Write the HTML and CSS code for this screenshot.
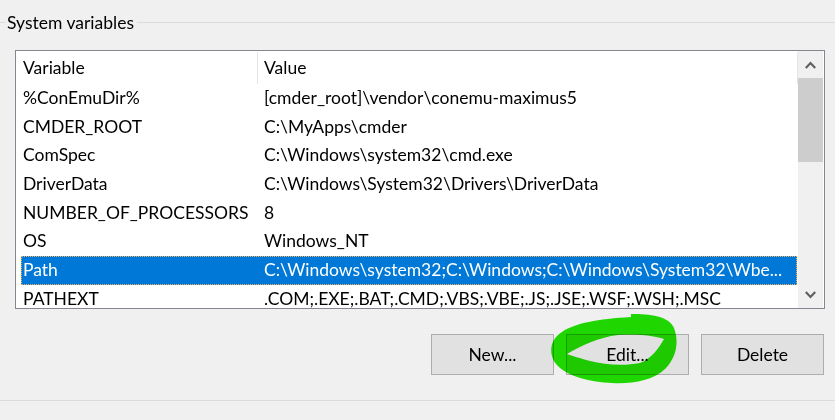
FILE: index.html
```html
<!DOCTYPE html>
<html>
<head>
<meta charset="utf-8">
<link rel="stylesheet" href="styles.css">
</head>
<body>
<div class="page">
  <div class="group-title">
    <div class="lead"></div>
    <div class="label">System variables</div>
    <div class="rule"></div>
  </div>

  <div class="listbox">
    <div class="content">
      <div class="header">
        <div class="hcell hvar">Variable</div>
        <div class="hcell hval">Value</div>
      </div>
      <div class="row"><div class="cvar">%ConEmuDir%</div><div class="cval">[cmder_root]\vendor\conemu-maximus5</div></div>
      <div class="row"><div class="cvar">CMDER_ROOT</div><div class="cval">C:\MyApps\cmder</div></div>
      <div class="row"><div class="cvar">ComSpec</div><div class="cval">C:\Windows\system32\cmd.exe</div></div>
      <div class="row"><div class="cvar">DriverData</div><div class="cval">C:\Windows\System32\Drivers\DriverData</div></div>
      <div class="row"><div class="cvar">NUMBER_OF_PROCESSORS</div><div class="cval">8</div></div>
      <div class="row"><div class="cvar">OS</div><div class="cval">Windows_NT</div></div>
      <div class="row selected"><div class="cvar">Path</div><div class="cval">C:\Windows\system32;C:\Windows;C:\Windows\System32\Wbe...</div></div>
      <div class="row"><div class="cvar">PATHEXT</div><div class="cval">.COM;.EXE;.BAT;.CMD;.VBS;.VBE;.JS;.JSE;.WSF;.WSH;.MSC</div></div>
    </div>
    <div class="scrollbar">
      <div class="sbtn">
        <svg width="11" height="8" viewBox="0 0 11 8"><polyline points="0.8,7 5.5,2 10.2,7" fill="none" stroke="#606060" stroke-width="2.2"/></svg>
      </div>
      <div class="thumb"></div>
      <div class="track"></div>
      <div class="sbtn">
        <svg width="11" height="8" viewBox="0 0 11 8"><polyline points="0.8,1 5.5,6 10.2,1" fill="none" stroke="#606060" stroke-width="2.2"/></svg>
      </div>
    </div>
  </div>

  <div class="buttons">
    <button class="btn">New...</button>
    <button class="btn">Edit...</button>
    <button class="btn">Delete</button>
  </div>

  <div class="bottom-rule"></div>

  <svg class="scribble" width="835" height="420" viewBox="0 0 835 420">
    <path fill-rule="evenodd" fill="#22e400" d="M631,314 C650,314 669,316 674,328 C679,341 677,357 665,369 C652,381 632,384 612,383 C591,382 567,377 556,364 C548,354 550,339 562,332 C575,323 598,319 631,317 Z M567,354 C580,346 600,337 618,335 C635,334 654,335 664,339 C659,348 651,359 640,363 C625,366 605,365 590,361 C580,358 572,356 567,354 Z"/>
  </svg>
</div>
</body>
</html>
```
FILE: styles.css
```css
html, body {
  margin: 0;
  padding: 0;
}
body {
  background: #f0f0f0;
  font-family: Lato, "Noto Sans", sans-serif;
  font-size: 17.5px;
  color: #000;
}
.page {
  position: relative;
  width: 835px;
  height: 420px;
  overflow: hidden;
}
.group-title {
  display: flex;
  height: 50px;
}
.lead {
  width: 6px;
  height: 0;
  margin-top: 22px;
  border-top: 1px solid #dcdcdc;
}
.label {
  padding: 11px 3px 0 1px;
  line-height: 24px;
  height: 24px;
  white-space: nowrap;
}
.rule {
  flex: 1;
  height: 0;
  margin-top: 22px;
  border-top: 1px solid #dcdcdc;
}
.listbox {
  margin-left: 15px;
  width: 810px;
  height: 259px;
  box-sizing: border-box;
  border: 1px solid #828790;
  background: #fff;
  display: flex;
  overflow: hidden;
}
.content {
  flex: 1;
  overflow: hidden;
}
.header {
  display: flex;
  height: 33px;
}
.hcell {
  box-sizing: border-box;
  border-right: 1px solid #e5e5e5;
  margin: 1px 0 0;
  line-height: 32px;
  height: 32px;
  white-space: nowrap;
}
.hvar {
  width: 242px;
  padding-left: 7px;
}
.hval {
  width: 540px;
  padding-left: 6px;
}
.row {
  display: flex;
  height: 28.7px;
  line-height: 28.7px;
  margin-left: 5px;
  width: 776px;
  box-sizing: border-box;
  white-space: nowrap;
}
.cvar {
  width: 236px;
  flex: none;
  padding-left: 2px;
  box-sizing: border-box;
  overflow: hidden;
}
.cval {
  flex: 1;
  padding-left: 7px;
  overflow: hidden;
}
.row.selected {
  background: #0078d7;
  color: #fff;
  outline: 1px dotted #f0b060;
  outline-offset: -1px;
}
.scrollbar {
  width: 25px;
  margin-right: 1px;
  background: #f0f0f0;
  display: flex;
  flex-direction: column;
}
.sbtn {
  height: 27px;
  display: flex;
  align-items: center;
  justify-content: center;
  flex: none;
}
.thumb {
  height: 84px;
  background: #cdcdcd;
  flex: none;
}
.track {
  flex: 1;
}
.buttons {
  display: flex;
  justify-content: flex-end;
  gap: 12px;
  padding-right: 11px;
  margin-top: 25px;
}
.btn {
  width: 123px;
  height: 41px;
  box-sizing: border-box;
  background: #e1e1e1;
  border: 1px solid #adadad;
  font-family: Lato, "Noto Sans", sans-serif;
  font-size: 17.5px;
  color: #000;
  padding: 0;
  margin: 0;
}
.bottom-rule {
  margin-top: 25px;
  border-top: 1px solid #dcdcdc;
}
.scribble {
  position: absolute;
  left: 0;
  top: 0;
  pointer-events: none;
  mix-blend-mode: multiply;
}
```
